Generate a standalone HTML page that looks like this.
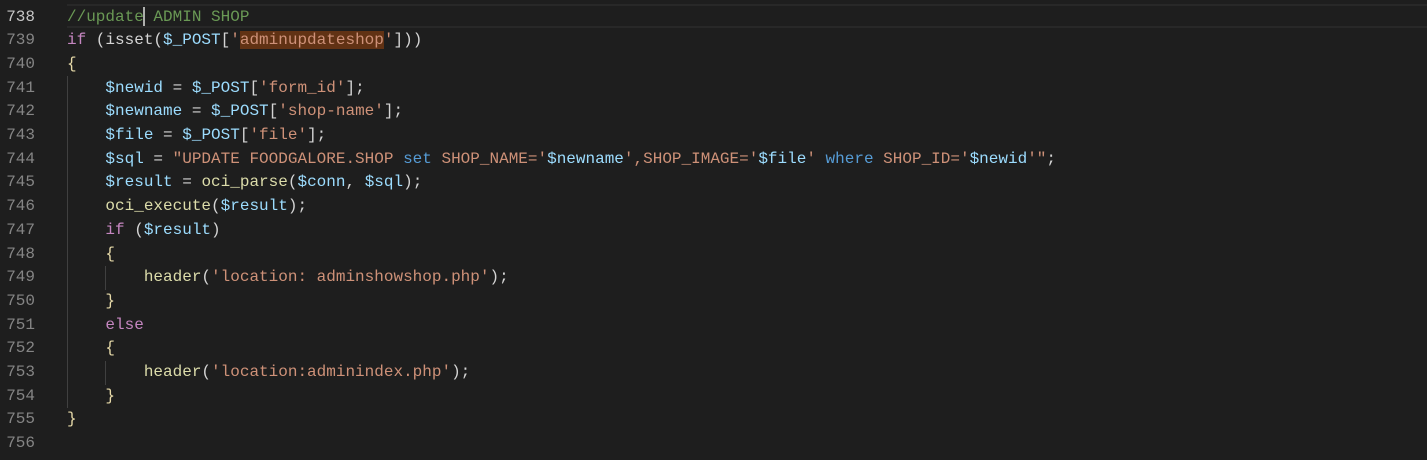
<!DOCTYPE html>
<html><head><meta charset="utf-8"><style>
html,body{margin:0;padding:0;background:#1e1e1e;width:1427px;height:460px;overflow:hidden}
body{font-family:"Liberation Mono",monospace;font-size:16px;position:relative}
.ln{position:absolute;left:0;width:35px;text-align:right;color:#858585}
.cd{position:absolute;left:67px;white-space:pre;color:#d4d4d4}
.row{position:absolute;left:0;right:0;height:23.7px;line-height:24.5px}
.cur{position:absolute;left:67px;right:0;top:4px;height:20px;border-top:2px solid #282828;border-bottom:2px solid #282828}
.g{position:absolute;width:1px;background:#404040}
.c{color:#6a9955}.k{color:#c586c0}.b{color:#569cd6}.v{color:#9cdcfe}.s{color:#ce9178}.f{color:#dcdcaa}.y{color:#e6d9a8}
.hl{background:#613214}
.caret{display:inline-block;width:2px;height:19px;background:#aeafad;vertical-align:middle;margin-left:-1px;margin-right:-1px}
</style></head><body>
<div class="cur"></div>
<div class="g" style="left:67px;top:76px;height:332px"></div>
<div class="g" style="left:105px;top:266px;height:24px"></div>
<div class="g" style="left:105px;top:361px;height:24px"></div>
<div class="row" style="top:4.5px"><span class="ln" style="color:#c6c6c6">738</span><span class="cd"><span class="c">//update<span class="caret"></span> ADMIN SHOP</span></span></div>
<div class="row" style="top:28.2px"><span class="ln">739</span><span class="cd"><span class="k">if</span> (isset(<span class="v">$_POST</span>[<span class="s">'<span class="hl">adminupdateshop</span>'</span>]))</span></div>
<div class="row" style="top:51.9px"><span class="ln">740</span><span class="cd"><span class="y">{</span></span></div>
<div class="row" style="top:75.6px"><span class="ln">741</span><span class="cd">    <span class="v">$newid</span> = <span class="v">$_POST</span>[<span class="s">'form_id'</span>];</span></div>
<div class="row" style="top:99.3px"><span class="ln">742</span><span class="cd">    <span class="v">$newname</span> = <span class="v">$_POST</span>[<span class="s">'shop-name'</span>];</span></div>
<div class="row" style="top:123px"><span class="ln">743</span><span class="cd">    <span class="v">$file</span> = <span class="v">$_POST</span>[<span class="s">'file'</span>];</span></div>
<div class="row" style="top:146.7px"><span class="ln">744</span><span class="cd">    <span class="v">$sql</span> = <span class="s">"UPDATE FOODGALORE.SHOP </span><span class="b">set</span><span class="s"> SHOP_NAME='</span><span class="v">$newname</span><span class="s">',SHOP_IMAGE='</span><span class="v">$file</span><span class="s">' </span><span class="b">where</span><span class="s"> SHOP_ID='</span><span class="v">$newid</span><span class="s">'"</span>;</span></div>
<div class="row" style="top:170.4px"><span class="ln">745</span><span class="cd">    <span class="v">$result</span> = <span class="f">oci_parse</span>(<span class="v">$conn</span>, <span class="v">$sql</span>);</span></div>
<div class="row" style="top:194.1px"><span class="ln">746</span><span class="cd">    <span class="f">oci_execute</span>(<span class="v">$result</span>);</span></div>
<div class="row" style="top:217.8px"><span class="ln">747</span><span class="cd">    <span class="k">if</span> (<span class="v">$result</span>)</span></div>
<div class="row" style="top:241.5px"><span class="ln">748</span><span class="cd">    <span class="y">{</span></span></div>
<div class="row" style="top:265.2px"><span class="ln">749</span><span class="cd">        <span class="f">header</span>(<span class="s">'location: adminshowshop.php'</span>);</span></div>
<div class="row" style="top:288.9px"><span class="ln">750</span><span class="cd">    <span class="y">}</span></span></div>
<div class="row" style="top:312.6px"><span class="ln">751</span><span class="cd">    <span class="k">else</span></span></div>
<div class="row" style="top:336.3px"><span class="ln">752</span><span class="cd">    <span class="y">{</span></span></div>
<div class="row" style="top:360px"><span class="ln">753</span><span class="cd">        <span class="f">header</span>(<span class="s">'location:adminindex.php'</span>);</span></div>
<div class="row" style="top:383.7px"><span class="ln">754</span><span class="cd">    <span class="y">}</span></span></div>
<div class="row" style="top:407.4px"><span class="ln">755</span><span class="cd"><span class="y">}</span></span></div>
<div class="row" style="top:431.1px"><span class="ln">756</span><span class="cd"></span></div>
</body></html>
